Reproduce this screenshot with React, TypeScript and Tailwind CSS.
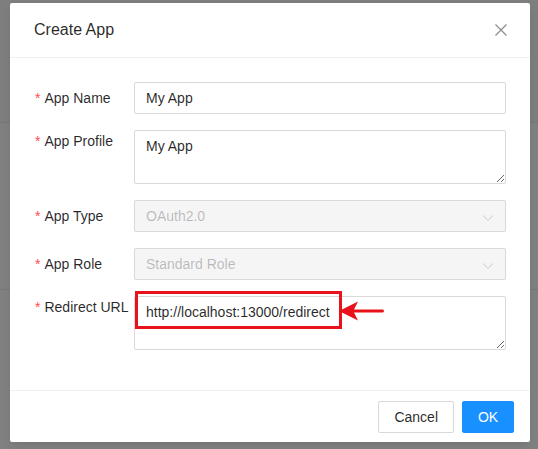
import React from "react";

const font = { fontFamily: '"Liberation Sans", Arial, sans-serif' };

function Chevron() {
  return (
    <svg width="12" height="8" viewBox="0 0 12 8" className="absolute right-[11px] top-[13px]">
      <path d="M1 1.5 L6 6.5 L11 1.5" fill="none" stroke="#c8c8c8" strokeWidth="1" />
    </svg>
  );
}

function Label({ text, tall }: { text: string; tall?: boolean }) {
  return (
    <div className={`w-[100px] shrink-0 text-[14px] text-[rgba(0,0,0,0.85)] flex items-start ${tall ? "leading-[22px]" : "leading-[32px]"}`}>
      <span className="text-[#ff4d4f] text-[14px] mr-[4px] ml-[1px]">*</span>
      <span>{text}</span>
    </div>
  );
}

export default function App() {
  return (
    <div style={font} className="relative w-[538px] h-[449px] overflow-hidden bg-[#7f7f7f]">
      <div className="absolute left-0 right-0 top-[122px] h-px bg-[#777777]" />
      <div className="absolute left-0 right-0 top-[123px] bottom-0 bg-[#828282]" />
      <div className="absolute left-0 right-0 top-[289px] h-px bg-[#787878]" />
      <div className="relative pl-[10px] pt-[3px]">
        <div className="w-[520px] h-[439px] bg-white rounded-[2px] shadow-[0_3px_6px_-4px_rgba(0,0,0,0.12),0_6px_16px_0_rgba(0,0,0,0.08)] flex flex-col">
          <div className="h-[55px] px-[24px] flex items-center justify-between border-b border-[#f0f0f0] shrink-0">
            <div className="text-[16px] leading-[22px] text-[rgba(0,0,0,0.85)]">Create App</div>
            <svg width="14" height="14" viewBox="0 0 14 14" className="mr-[-2px]">
              <path d="M1.5 1.5 L12.5 12.5 M12.5 1.5 L1.5 12.5" stroke="#8c8c8c" strokeWidth="1.2" />
            </svg>
          </div>
          <div className="flex-1 px-[24px] pt-[24px] flex flex-col gap-[16px]">
            <div className="flex">
              <Label text="App Name" />
              <div className="flex-1 h-[32px] border border-[#d9d9d9] rounded-[2px] px-[11px] text-[14px] leading-[30px] text-[rgba(0,0,0,0.85)]">My App</div>
            </div>
            <div className="flex">
              <Label text="App Profile" tall />
              <textarea
                readOnly
                defaultValue="My App"
                style={font}
                className="flex-1 h-[54px] border border-[#d9d9d9] rounded-[2px] px-[11px] py-[4px] text-[14px] leading-[22px] text-[rgba(0,0,0,0.85)] outline-none resize-y block"
              />
            </div>
            <div className="flex">
              <Label text="App Type" />
              <div className="relative flex-1 h-[32px] border border-[#d9d9d9] bg-[#f5f5f5] rounded-[2px] px-[11px] text-[14px] leading-[30px] text-[rgba(0,0,0,0.25)]">
                OAuth2.0
                <Chevron />
              </div>
            </div>
            <div className="flex">
              <Label text="App Role" />
              <div className="relative flex-1 h-[32px] border border-[#d9d9d9] bg-[#f5f5f5] rounded-[2px] px-[11px] text-[14px] leading-[30px] text-[rgba(0,0,0,0.25)]">
                Standard Role
                <Chevron />
              </div>
            </div>
            <div className="flex">
              <Label text="Redirect URL" tall />
              <div className="relative flex-1">
                <textarea
                  readOnly
                  defaultValue="http://localhost:13000/redirect"
                  style={font}
                  className="w-full h-[54px] border border-[#d9d9d9] rounded-[2px] px-[11px] py-[4px] text-[14px] leading-[22px] text-[rgba(0,0,0,0.85)] outline-none resize-y block"
                />
                <div className="absolute left-[1px] top-[-5px] w-[207px] h-[38px] border-[3px] border-[#e8121c]" />
                <svg width="48" height="22" viewBox="0 0 48 22" className="absolute left-[205px] top-[4px]">
                  <path d="M0 11 L19 1.5 L15 9.5 L44 9.5 Q46 11 44 12.5 L15 12.5 L19 20.5 Z" fill="#e8121c" />
                </svg>
              </div>
            </div>
          </div>
          <div className="h-[52px] border-t border-[#f0f0f0] px-[16px] flex items-center justify-end gap-[8px] shrink-0">
            <div className="h-[32px] px-[15px] border border-[#d9d9d9] rounded-[2px] text-[14px] leading-[30px] text-[rgba(0,0,0,0.85)] bg-white">Cancel</div>
            <div className="h-[32px] w-[52px] text-center border border-[#1890ff] rounded-[2px] text-[14px] leading-[30px] text-white bg-[#1890ff]">OK</div>
          </div>
        </div>
      </div>
    </div>
  );
}
